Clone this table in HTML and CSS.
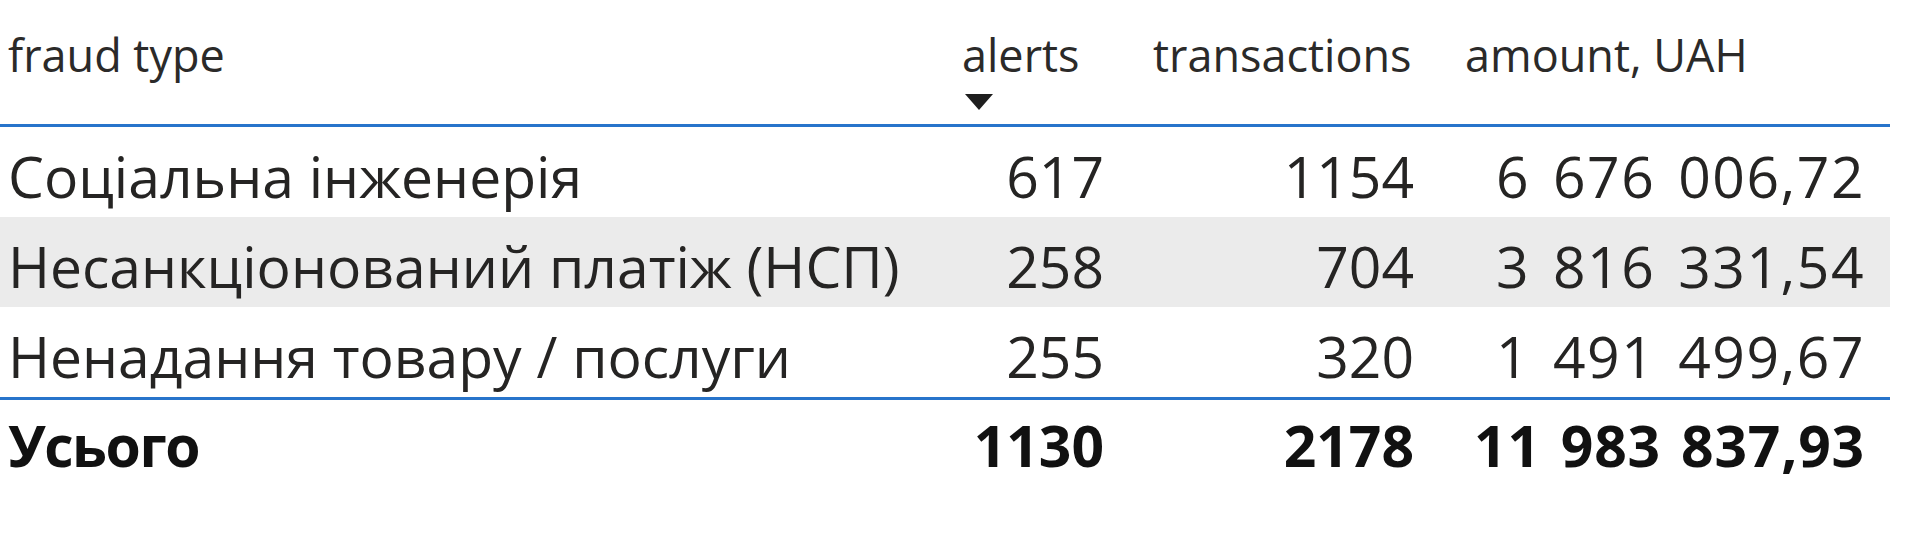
FILE: index.html
```html
<!DOCTYPE html>
<html lang="uk">
<head>
<meta charset="utf-8">
<title>fraud type</title>
<link rel="stylesheet" href="styles.css">
</head>
<body>
<div class="table">
  <div class="row head">
    <div class="cell c1">fraud type</div>
    <div class="cell c2"><span class="htext">alerts</span><span class="sort"></span></div>
    <div class="cell c3">transactions</div>
    <div class="cell c4">amount, UAH</div>
  </div>
  <div class="row body">
    <div class="cell c1">Соціальна інженерія</div>
    <div class="cell c2 num">617</div>
    <div class="cell c3 num">1154</div>
    <div class="cell c4 num">6<span class="sep"></span>676<span class="sep"></span>006,72</div>
  </div>
  <div class="row body alt">
    <div class="cell c1">Несанкціонований платіж (НСП)</div>
    <div class="cell c2 num">258</div>
    <div class="cell c3 num">704</div>
    <div class="cell c4 num">3<span class="sep"></span>816<span class="sep"></span>331,54</div>
  </div>
  <div class="row body">
    <div class="cell c1">Ненадання товару / послуги</div>
    <div class="cell c2 num">255</div>
    <div class="cell c3 num">320</div>
    <div class="cell c4 num">1<span class="sep"></span>491<span class="sep"></span>499,67</div>
  </div>
  <div class="row total">
    <div class="cell c1 label">Усього</div>
    <div class="cell c2 num">1130</div>
    <div class="cell c3 num">2178</div>
    <div class="cell c4 num">11<span class="sep"></span>983<span class="sep"></span>837,93</div>
  </div>
</div>
</body>
</html>
```
FILE: styles.css
```css
html, body {
  margin: 0;
  padding: 0;
  background: #ffffff;
}

body {
  font-family: "Open Sans", "Noto Sans", sans-serif;
  color: #252423;
}

.table {
  width: 1890px;
}

.row {
  display: grid;
  grid-template-columns: 958px 150px 310px 472px;
}

.head {
  height: 124px;
  border-bottom: 3px solid #2774cb;
  font-size: 45px;
  line-height: 57px;
  color: #2b2a29;
}

.head .cell {
  padding-top: 26px;
  white-space: nowrap;
}

.head .c1 { padding-left: 8px; }
.head .c2 { padding-left: 4px; display: flex; flex-direction: column; align-items: flex-start; }
.head .c3 { padding-left: 45px; }
.head .c4 { padding-left: 47px; }

.sort {
  width: 0;
  height: 0;
  margin-top: 11px;
  margin-left: 3px;
  border-left: 14px solid transparent;
  border-right: 14px solid transparent;
  border-top: 16px solid #1e1e1e;
}

.body, .total {
  height: 90px;
  font-size: 57px;
  line-height: 82px;
}

.body .cell {
  padding-top: 8px;
  white-space: nowrap;
}

.alt {
  background: #ebebeb;
}

.total {
  border-top: 3px solid #2774cb;
  font-weight: 700;
  color: #111111;
}

.total .cell {
  padding-top: 4px;
  white-space: nowrap;
}

.total .label {
  letter-spacing: -1.5px;
}

.body .c4.num {
  letter-spacing: 1.5px;
}

.total .c4.num {
  letter-spacing: 0.8px;
}

.sep {
  display: inline-block;
  width: 23px;
}

.total .sep {
  width: 20px;
}

.c1 { padding-left: 8px; }

.num { text-align: right; }
.num.c2 { padding-right: 4px; }
.num.c3 { padding-right: 4px; }
.num.c4 { padding-right: 25px; }
```
